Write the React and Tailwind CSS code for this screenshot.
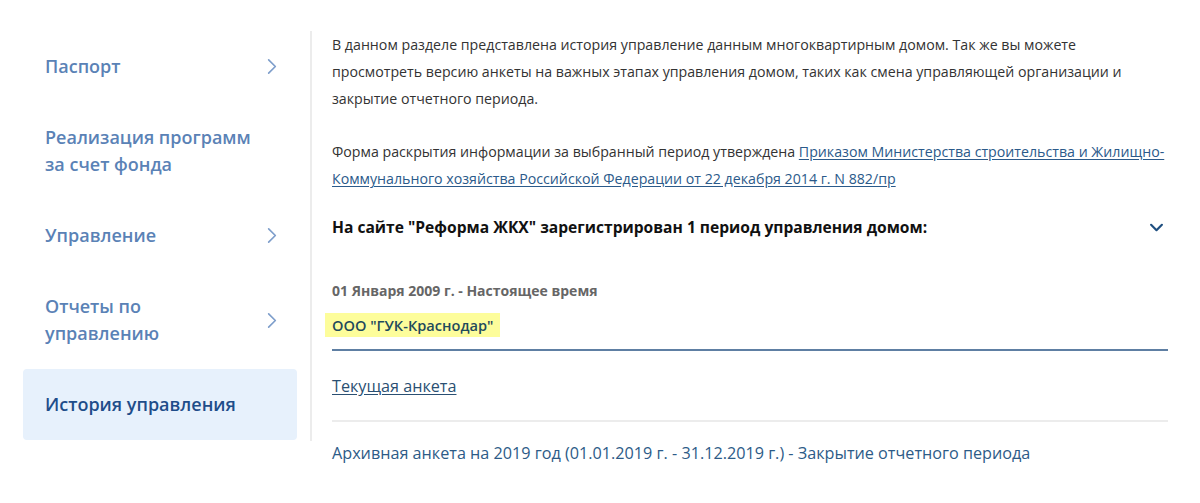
import React from "react";

const Chevron = ({ className }) => (
  <svg
    viewBox="0 0 12 20"
    className={className}
    fill="none"
    stroke="currentColor"
    strokeWidth="2"
    strokeLinecap="round"
    strokeLinejoin="round"
  >
    <path d="M2 2l8 8-8 8" />
  </svg>
);

const menu = [
  { title: ["Паспорт"], arrow: true },
  { title: ["Реализация программ", "за счет фонда"], arrow: false },
  { title: ["Управление"], arrow: true },
  { title: ["Отчеты по", "управлению"], arrow: true },
  { title: ["История управления"], arrow: false, active: true },
];

const App = () => {
  return (
    <div
      className="w-[1200px] h-[503px] bg-white flex overflow-hidden"
      style={{ fontFamily: '"Open Sans", "Liberation Sans", sans-serif' }}
    >
      <div className="w-[312px] pl-[23px] pr-[14px] pt-[31px] shrink-0">
        <div className="border-r-2 border-[#ececec] pr-[14px] -mr-[14px] pb-[1px]">
          {menu.map((item, i) => (
            <div
              key={i}
              className={
                "flex items-center justify-between pl-[22px] pr-[20px] py-[22px] rounded-[4px] w-[274px] " +
                (item.active ? "bg-[#e7f1fc]" : "")
              }
            >
              <div
                className={
                  "text-[18px] leading-[27px] font-semibold " +
                  (item.active ? "text-[#1e4d8a]" : "text-[#5a82b6]")
                }
              >
                {item.title.map((t, j) => (
                  <div key={j}>{t}</div>
                ))}
              </div>
              {item.arrow && <Chevron className="w-[10px] h-[17px] text-[#7e9ecb]" />}
            </div>
          ))}
        </div>
      </div>

      <div className="flex-1 pl-[20px] pr-[32px] pt-[31px] text-[#333333]">
        <p className="text-[14.2px] leading-[27px]">
          В данном разделе представлена история управление данным многоквартирным домом. Так же вы можете
          просмотреть версию анкеты на важных этапах управления домом, таких как смена управляющей организации и
          закрытие отчетного периода.
        </p>
        <p className="text-[14.2px] leading-[27px] mt-[26px]">
          Форма раскрытия информации за выбранный период утверждена{" "}
          <a href="#" className="text-[#2b5a8a] underline underline-offset-2">
            Приказом Министерства строительства и Жилищно-Коммунального хозяйства Российской Федерации от 22 декабря 2014 г. N 882/пр
          </a>
        </p>

        <div className="flex items-center justify-between mt-[22px]">
          <div className="text-[15.6px] font-bold text-[#111111] leading-[27px]">
            На сайте "Реформа ЖКХ" зарегистрирован 1 период управления домом:
          </div>
          <svg viewBox="0 0 16 10" className="w-[15px] h-[9px] mr-[4px] text-[#1f4f80]" fill="none" stroke="currentColor" strokeWidth="2.4" strokeLinecap="round" strokeLinejoin="round">
            <path d="M2 2l6 6 6-6" />
          </svg>
        </div>

        <div className="mt-[40px] text-[14px] font-bold text-[#666666] leading-[20px]">
          01 Января 2009 г. - Настоящее время
        </div>
        <div className="mt-[12px] -ml-[7px]">
          <span className="inline-block bg-[#fdfd9b] px-[7px] py-[2px] text-[14.6px] font-semibold text-[#1f4a5c] leading-[20px]">
            ООО "ГУК-Краснодар"
          </span>
        </div>
        <div className="mt-[12px] border-b-2 border-[#5e7fa3]" />

        <div className="pt-[23px] pb-[22px]">
          <a href="#" className="text-[16.2px] text-[#2a4f72] underline underline-offset-2 leading-[24px]">
            Текущая анкета
          </a>
        </div>
        <div className="border-b-2 border-[#ececec]" />
        <div className="pt-[19px] text-[16.2px] text-[#2d5b87] leading-[24px]">
          Архивная анкета на 2019 год (01.01.2019 г. - 31.12.2019 г.) - Закрытие отчетного периода
        </div>
      </div>
    </div>
  );
};

export default App;
